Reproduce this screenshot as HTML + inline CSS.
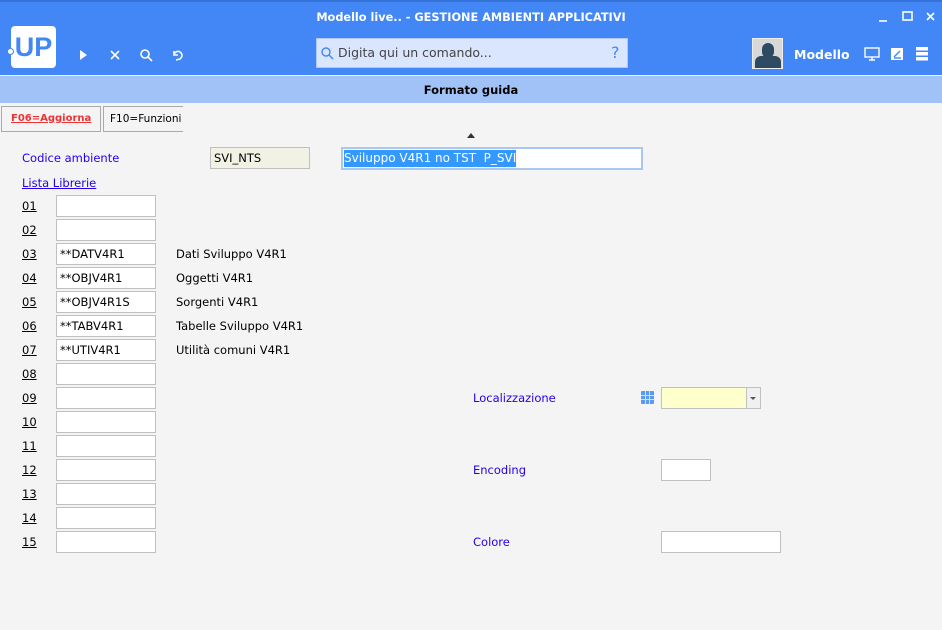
<!DOCTYPE html>
<html><head><meta charset="utf-8"><style>
*{margin:0;padding:0;box-sizing:border-box}
body{width:942px;height:630px;background:#f4f4f4;font-family:"DejaVu Sans","Liberation Sans",sans-serif;font-size:11.5px;position:relative;overflow:hidden;color:#000}
.a{position:absolute}
.hdr{left:0;top:0;width:942px;height:75px;background:#4287f5;border-top:2px solid #3573d8}
.sub{left:0;top:76px;width:942px;height:27px;background:#a0c2f6;text-align:center;font-weight:bold;font-size:11.5px;line-height:28px}
.in{position:absolute;width:100px;height:22px;border:1px solid #c0c0c0;background:#fff;padding-left:3px;line-height:21px;font-size:11.5px}
.num{position:absolute;left:22px;text-decoration:underline;font-size:11.5px}
.desc{position:absolute;left:176px;font-size:11.5px}
.blue{color:#2200ee}
</style></head><body>
<div class="a hdr"></div>
<div class="a" style="left:0;top:11px;width:942px;text-align:center;color:#fff;font-weight:bold;font-size:11.3px">Modello live.. - GESTIONE AMBIENTI APPLICATIVI</div>
<div class="a" style="left:11px;top:26px;width:45px;height:42px;background:#fff;border-radius:4px;color:#4287f5;font-family:'Liberation Sans',sans-serif;font-weight:bold;font-size:27px;line-height:42px;text-align:center">UP</div>
<div class="a" style="left:7px;top:48px;width:7px;height:7px;border-radius:50%;background:#fff;border:1px solid #4287f5"></div>
<svg class="a" style="left:76px;top:45px" width="120" height="20" viewBox="0 0 120 20" fill="none" stroke="#fff" stroke-width="1.6">
<path d="M4 5 L11 10 L4 15Z" fill="#fff" stroke="none"/>
<path d="M35 6 L43 14 M43 6 L35 14"/>
<circle cx="69" cy="9" r="4"/><path d="M72 12 L76 16"/>
<path d="M98 6 L98 10 L102 10 M98 9 Q101 5 104 7 Q108 10 104 14 L100 15"/>
</svg>
<div class="a" style="left:316px;top:38px;width:312px;height:30px;background:#d9e6fd;border:1px solid #b0c8f0"></div>
<svg class="a" style="left:320px;top:46px" width="14" height="14"><circle cx="6" cy="6" r="4" fill="none" stroke="#4287f5" stroke-width="1.4"/><path d="M9 9 L13 13" stroke="#4287f5" stroke-width="1.4"/></svg>
<div class="a" style="left:338px;top:45px;color:#444;font-size:12.5px">Digita qui un comando...</div>
<div class="a" style="left:611px;top:43px;color:#4287f5;font-size:16px">?</div>
<div class="a" style="left:752px;top:38px;width:31px;height:31px;background:#d8d8d8;border:1px solid #eee;overflow:hidden">
<div class="a" style="left:9px;top:4px;width:12px;height:15px;border-radius:6px;background:#2e4a60"></div>
<div class="a" style="left:2px;top:17px;width:26px;height:14px;border-radius:6px 6px 0 0;background:#2e4a60"></div></div>
<div class="a" style="left:794px;top:47px;color:#fff;font-weight:bold;font-size:12.5px">Modello</div>
<svg class="a" style="left:864px;top:46px" width="70" height="16" fill="none" stroke="#fff" stroke-width="1.4">
<rect x="1" y="2" width="14" height="9"/><path d="M8 11 V14 M5 14 H11"/>
<rect x="27" y="2" width="12" height="12" fill="#fff" stroke="none"/><path d="M30 11 L36 5" stroke="#4287f5"/><path d="M30 12 H37" stroke="#4287f5"/>
<rect x="52" y="1" width="12" height="3.5" fill="#fff" stroke="none"/><rect x="52" y="6" width="12" height="3.5" fill="#fff" stroke="none"/><rect x="52" y="11" width="12" height="3.5" fill="#fff" stroke="none"/>
</svg>
<svg class="a" style="left:875px;top:10px" width="62" height="14" stroke="#fff" stroke-width="1.6" fill="none">
<path d="M4 11 H12"/><rect x="28" y="2" width="9" height="8"/><path d="M52 3 L59 10 M59 3 L52 10"/></svg>
<div class="a sub">Formato guida</div>
<div class="a" style="left:1px;top:106px;width:100px;height:26px;border:1px solid #aaa;color:#ee3333;font-weight:bold;text-decoration:underline;font-size:10px;line-height:24px;padding-left:9px">F06=Aggiorna</div>
<div class="a" style="left:103px;top:106px;width:80px;height:26px;border:1px solid #aaa;border-right:none;font-size:10.5px;line-height:24px;padding-left:6px">F10=Funzioni</div>
<div class="a" style="left:467px;top:133px;width:0;height:0;border-left:4px solid transparent;border-right:4px solid transparent;border-bottom:5px solid #333"></div>
<div class="a blue" style="left:22px;top:151px">Codice ambiente</div>
<div class="in" style="left:210px;top:147px;background:#f2f2e4;height:22px">SVI_NTS</div>
<div class="a" style="left:341px;top:147px;width:302px;height:23px;border:2px solid #a8c8f0;background:#fff;padding:1px 1px"><span style="background:#3399ff;color:#fff;font-size:12px;line-height:17px;display:inline-block">Sviluppo V4R1 no TST&nbsp; P_SVI</span></div>
<div class="a blue" style="left:22px;top:176px;text-decoration:underline">Lista Librerie</div>

<div class="num" style="top:199px">01</div><div class="in" style="left:56px;top:195px"></div>
<div class="num" style="top:223px">02</div><div class="in" style="left:56px;top:219px"></div>
<div class="num" style="top:247px">03</div><div class="in" style="left:56px;top:243px">**DATV4R1</div><div class="desc" style="top:247px">Dati Sviluppo V4R1</div>
<div class="num" style="top:271px">04</div><div class="in" style="left:56px;top:267px">**OBJV4R1</div><div class="desc" style="top:271px">Oggetti V4R1</div>
<div class="num" style="top:295px">05</div><div class="in" style="left:56px;top:291px">**OBJV4R1S</div><div class="desc" style="top:295px">Sorgenti V4R1</div>
<div class="num" style="top:319px">06</div><div class="in" style="left:56px;top:315px">**TABV4R1</div><div class="desc" style="top:319px">Tabelle Sviluppo V4R1</div>
<div class="num" style="top:343px">07</div><div class="in" style="left:56px;top:339px">**UTIV4R1</div><div class="desc" style="top:343px">Utilità comuni V4R1</div>
<div class="num" style="top:367px">08</div><div class="in" style="left:56px;top:363px"></div>
<div class="num" style="top:391px">09</div><div class="in" style="left:56px;top:387px"></div>
<div class="num" style="top:415px">10</div><div class="in" style="left:56px;top:411px"></div>
<div class="num" style="top:439px">11</div><div class="in" style="left:56px;top:435px"></div>
<div class="num" style="top:463px">12</div><div class="in" style="left:56px;top:459px"></div>
<div class="num" style="top:487px">13</div><div class="in" style="left:56px;top:483px"></div>
<div class="num" style="top:511px">14</div><div class="in" style="left:56px;top:507px"></div>
<div class="num" style="top:535px">15</div><div class="in" style="left:56px;top:531px"></div>

<div class="a blue" style="left:473px;top:391px">Localizzazione</div>
<svg class="a" style="left:641px;top:391px" width="13" height="13"><rect width="13" height="13" rx="1" fill="#5a9af0"/><path d="M0 4.5H13M0 8.5H13M4.5 0V13M8.5 0V13" stroke="#cfe0fb" stroke-width="1"/></svg>
<div class="a" style="left:661px;top:387px;width:100px;height:22px;border:1px solid #c0c0c0;background:#ffffcc"></div>
<div class="a" style="left:746px;top:388px;width:14px;height:20px;background:#f0f0f0;border-left:1px solid #c0c0c0"></div>
<div class="a" style="left:750px;top:397px;border-left:3px solid transparent;border-right:3px solid transparent;border-top:3px solid #555"></div>
<div class="a blue" style="left:473px;top:463px">Encoding</div>
<div class="in" style="left:661px;top:459px;width:50px"></div>
<div class="a blue" style="left:473px;top:535px">Colore</div>
<div class="in" style="left:661px;top:531px;width:120px"></div>
</body></html>
